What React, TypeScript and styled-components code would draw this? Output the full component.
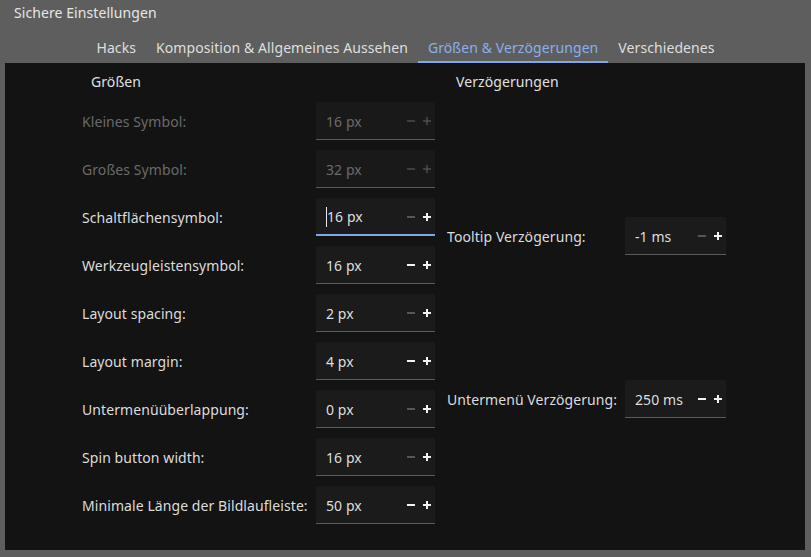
import React from 'react'
import styled, { createGlobalStyle } from 'styled-components'

type TSpin = {
  label: string
  value: string
  disabled?: boolean
  focused?: boolean
  atMin?: boolean
}

const GlobalStyle = createGlobalStyle`
  html, body {
    margin: 0;
    padding: 0;
    background: #5e5e5e;
  }
  body {
    font-family: 'Noto Sans', 'Open Sans', sans-serif;
    font-size: 14px;
    letter-spacing: 0.08px;
  }
`

const Window = styled.div`
  width: 811px;
  height: 557px;
  background: #5e5e5e;
  display: flex;
  flex-direction: column;
  overflow: hidden;
`

const TitleBar = styled.div`
  height: 25px;
  line-height: 25px;
  padding: 0 0 2px 14px;
  color: #e6e6e6;
`

const TabBar = styled.div`
  height: 36px;
  display: flex;
  justify-content: center;
`

const Tab = styled.div<{ active?: boolean }>`
  box-sizing: border-box;
  height: 36px;
  padding: 11px 10px 0;
  line-height: 19px;
  color: ${({ active }) => (active ? '#88b0ec' : '#dedede')};
  border-bottom: 2px solid ${({ active }) => (active ? '#7ea8ea' : 'transparent')};
  white-space: nowrap;
`

const Panel = styled.div`
  box-sizing: border-box;
  width: 800px;
  height: 487px;
  margin-left: 5px;
  background: #131313;
  padding: 9px 0 0 77px;
  display: flex;
  gap: 12px;
`

const Column = styled.div`
  display: flex;
  flex-direction: column;
`

const Header = styled.div`
  line-height: 19px;
  padding-left: 9px;
  color: #e0e0e0;
`

const Form = styled.div<{ labelWidth: number; boxWidth: number; top: number; rowGap: number }>`
  display: grid;
  grid-template-columns: ${({ labelWidth, boxWidth }) => `${labelWidth}px ${boxWidth}px`};
  column-gap: 10px;
  row-gap: ${({ rowGap }) => rowGap}px;
  padding-top: ${({ top }) => top}px;
  align-items: center;
`

const Label = styled.div<{ disabled?: boolean }>`
  color: ${({ disabled }) => (disabled ? '#6a6a6a' : '#dcdcdc')};
  white-space: nowrap;
  padding-top: 1px;
`

const Box = styled.div<{ focused?: boolean; disabled?: boolean }>`
  box-sizing: border-box;
  height: 38px;
  display: flex;
  align-items: center;
  padding: 1px 4px 0 10px;
  background: ${({ disabled }) => (disabled ? '#191919' : '#1b1b1b')};
  border-bottom: ${({ focused }) => (focused ? '2px solid #7ea8ea' : '1px solid #5a5a5a')};
  border-radius: 2px 2px 0 0;
`

const Value = styled.span<{ disabled?: boolean }>`
  flex: 1;
  display: flex;
  align-items: center;
  color: ${({ disabled }) => (disabled ? '#6b6b6b' : '#dedede')};
`

const Caret = styled.span`
  width: 1px;
  height: 20px;
  background: #e8e8e8;
`

const Buttons = styled.div`
  display: flex;
  gap: 8px;
  align-items: center;
`

const Sign = ({ plus, color, thin }: { plus?: boolean; color: string; thin?: boolean }) => (
  <svg width="8" height="8" viewBox="0 0 8 8">
    <path d="M0 4H8" stroke={color} strokeWidth={thin ? 1.3 : 2} />
    {plus && <path d="M4 0V8" stroke={color} strokeWidth={thin ? 1.3 : 2} />}
  </svg>
)

const Spin = ({ value, disabled, focused, atMin }: Omit<TSpin, 'label'>) => {
  const minusColor = disabled ? '#555' : atMin ? '#565656' : '#f2f2f2'
  const plusColor = disabled ? '#555' : '#f2f2f2'
  return (
    <Box focused={focused} disabled={disabled}>
      <Value disabled={disabled}>
        {focused && <Caret />}
        {value}
      </Value>
      <Buttons>
        <Sign color={minusColor} thin={disabled} />
        <Sign plus color={plusColor} thin={disabled} />
      </Buttons>
    </Box>
  )
}

const sizes: TSpin[] = [
  { label: 'Kleines Symbol:', value: '16 px', disabled: true },
  { label: 'Großes Symbol:', value: '32 px', disabled: true },
  { label: 'Schaltflächensymbol:', value: '16 px', focused: true, atMin: true },
  { label: 'Werkzeugleistensymbol:', value: '16 px' },
  { label: 'Layout spacing:', value: '2 px', atMin: true },
  { label: 'Layout margin:', value: '4 px' },
  { label: 'Untermenüüberlappung:', value: '0 px', atMin: true },
  { label: 'Spin button width:', value: '16 px', atMin: true },
  { label: 'Minimale Länge der Bildlaufleiste:', value: '50 px' }
]

const delays: TSpin[] = [
  { label: 'Tooltip Verzögerung:', value: '-1 ms', atMin: true },
  { label: 'Untermenü Verzögerung:', value: '250 ms' }
]

const tabs = ['Hacks', 'Komposition & Allgemeines Aussehen', 'Größen & Verzögerungen', 'Verschiedenes']

export default function App(): JSX.Element {
  return (
    <Window>
      <GlobalStyle />
      <TitleBar>Sichere Einstellungen</TitleBar>
      <TabBar>
        {tabs.map((t, i) => (
          <Tab key={t} active={i === 2}>
            {t}
          </Tab>
        ))}
      </TabBar>
      <Panel>
        <Column>
          <Header>Größen</Header>
          <Form labelWidth={224} boxWidth={119} top={11} rowGap={10}>
            {sizes.map((s) => (
              <React.Fragment key={s.label}>
                <Label disabled={s.disabled}>{s.label}</Label>
                <Spin {...s} />
              </React.Fragment>
            ))}
          </Form>
        </Column>
        <Column>
          <Header>Verzögerungen</Header>
          <Form labelWidth={168} boxWidth={101} top={126} rowGap={125}>
            {delays.map((s) => (
              <React.Fragment key={s.label}>
                <Label>{s.label}</Label>
                <Spin {...s} />
              </React.Fragment>
            ))}
          </Form>
        </Column>
      </Panel>
    </Window>
  )
}
